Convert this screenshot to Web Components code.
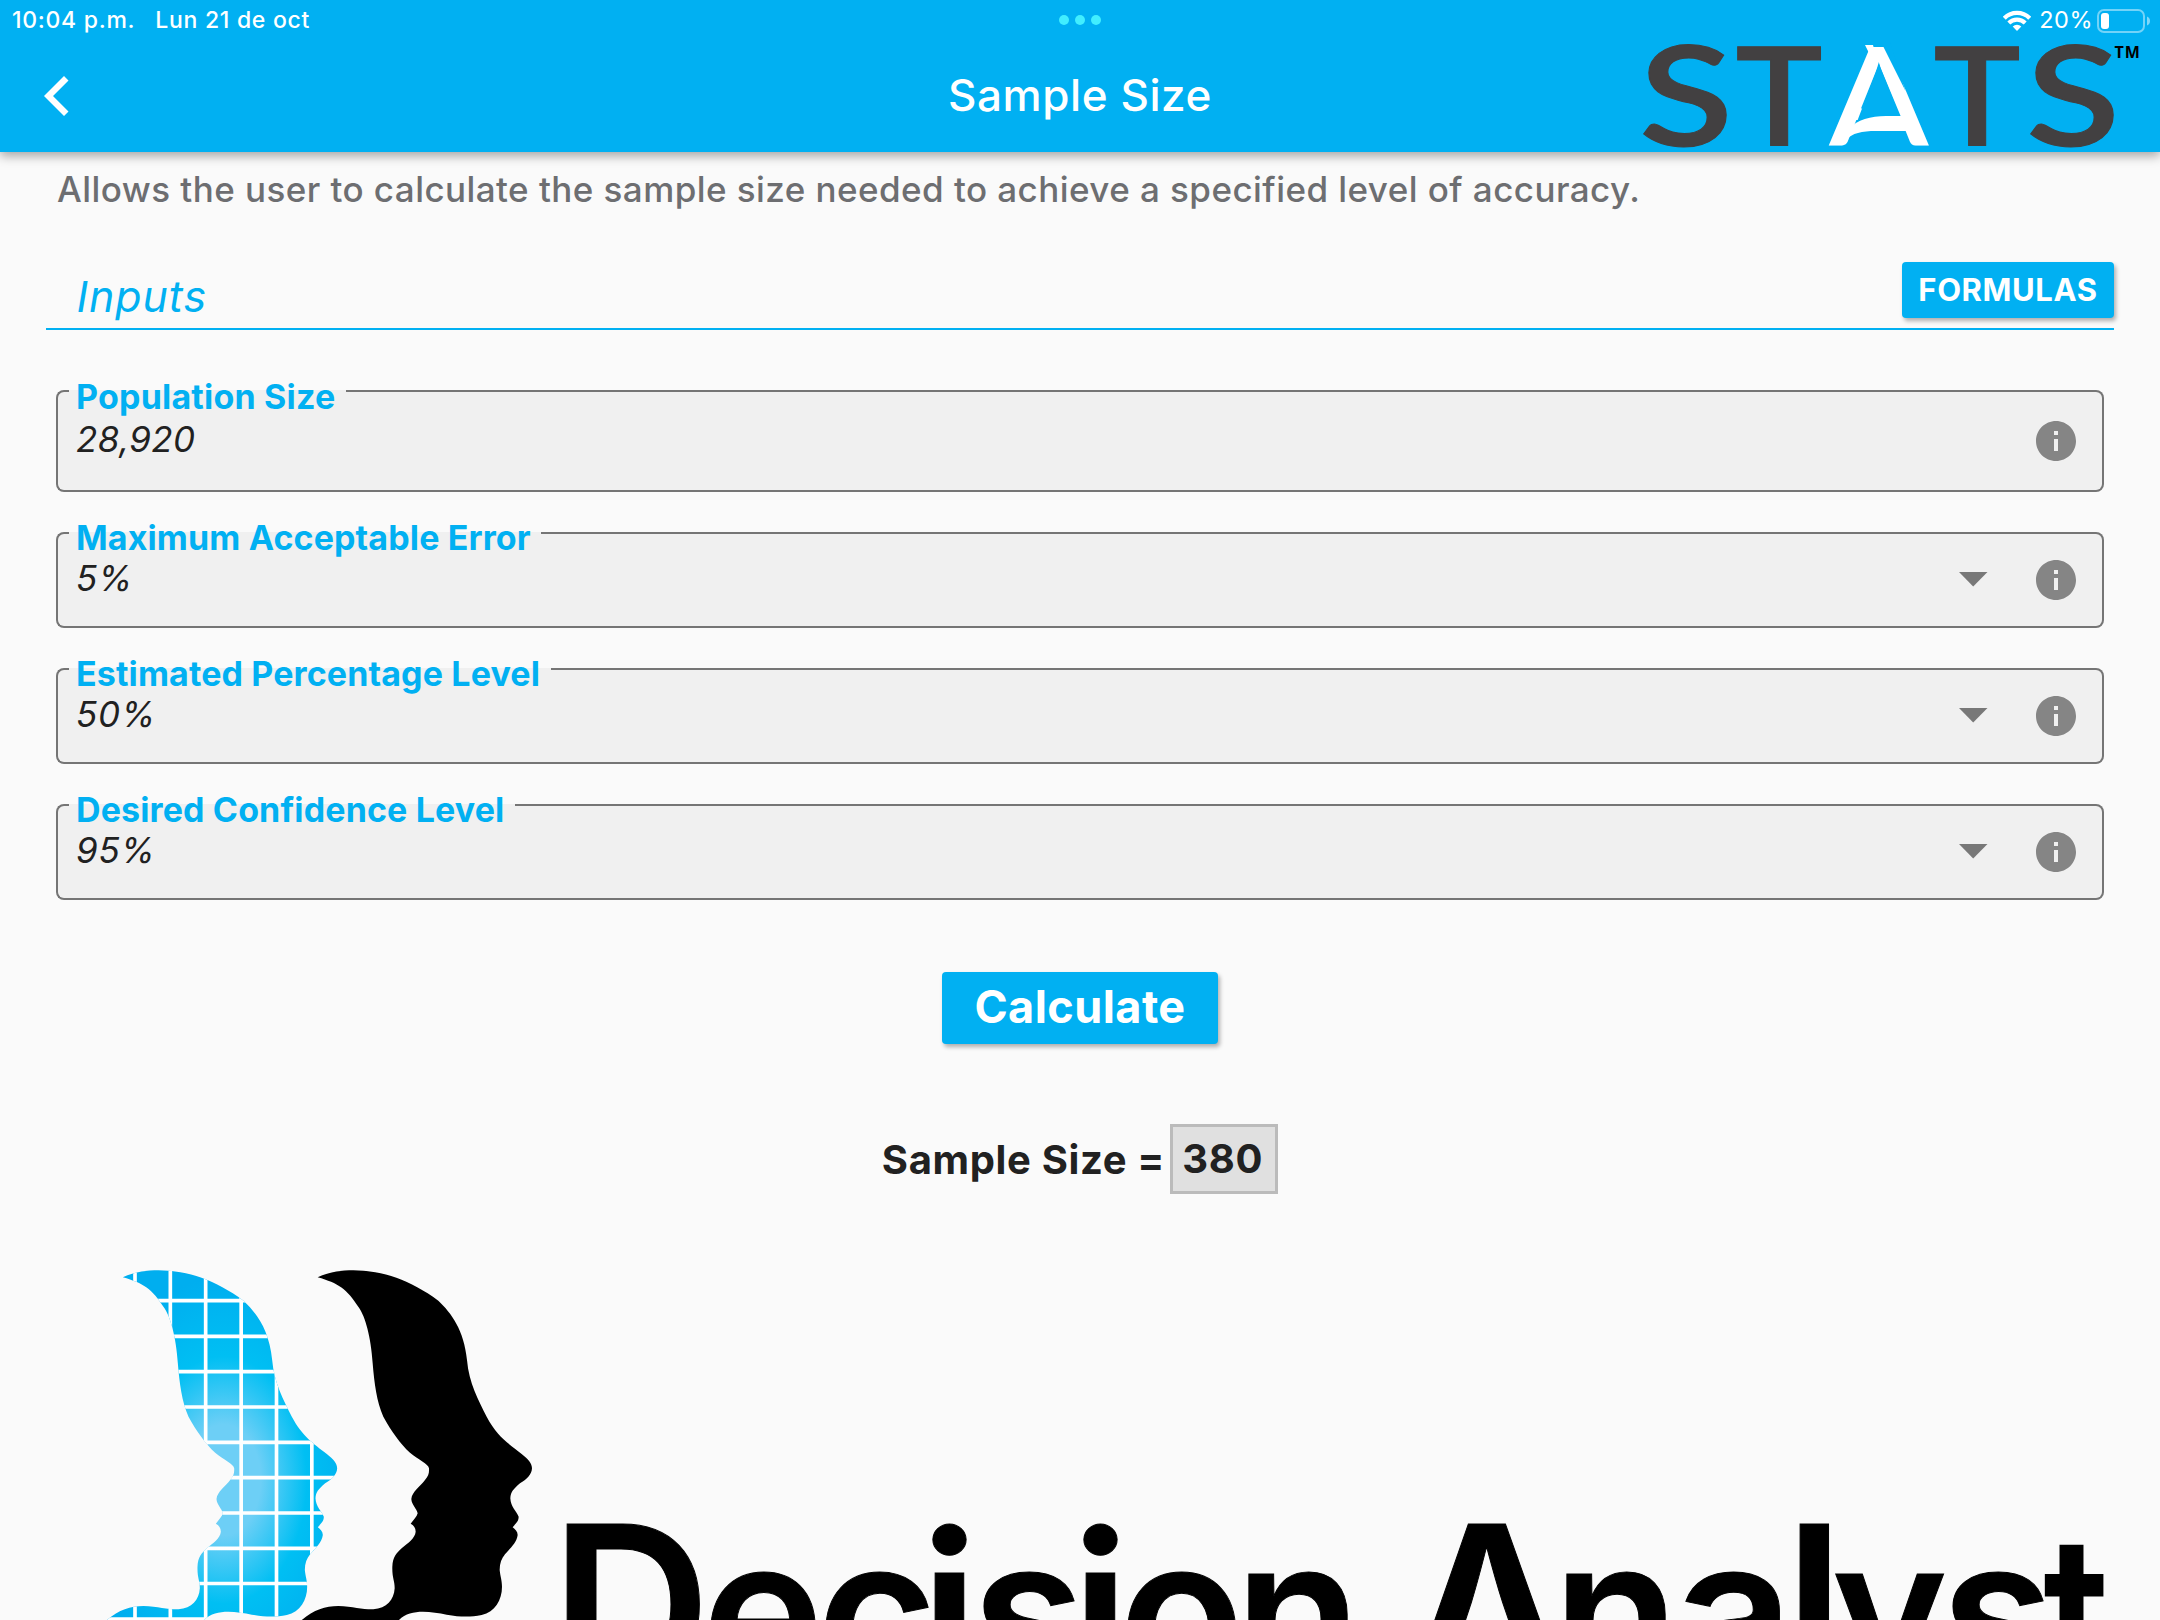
<!DOCTYPE html>
<html lang="en">
<head>
<meta charset="utf-8">
<title>Sample Size</title>
<style>
html,body{margin:0;height:1620px;overflow:hidden;background:#fafafa}
body{font-family:Inter,"Liberation Sans",sans-serif;color:#212121;--brand:#01b0f2}
</style>
</head>
<body>
<sample-size-page></sample-size-page>
<script>
const define=(name,html,init)=>{
  const t=document.createElement('template');t.innerHTML=html;
  customElements.define(name,class extends HTMLElement{
    connectedCallback(){
      if(this.shadowRoot)return;
      this.attachShadow({mode:'open'}).append(t.content.cloneNode(true));
      if(init)init.call(this,this.shadowRoot);
    }
  });
};

define('status-bar',`<style>
:host{display:grid;grid-template-columns:1fr auto 1fr;align-items:center;height:39px;color:#fff;font-size:23px;line-height:39px}
.l{display:flex;gap:20px;padding:1px 0 0 12px;font-weight:500;letter-spacing:.72px}
.dots{display:flex;gap:6px}.dots i{width:10px;height:10px;border-radius:50%;background:#41eeff}
.r{display:flex;justify-content:flex-end;align-items:center}
.pct{letter-spacing:.5px;margin-left:8px;margin-right:3px;font-size:23.5px;line-height:28px}
svg{display:block}
</style>
<div class="l"><span>10:04 p.m.</span><span>Lun 21 de oct</span></div>
<div class="dots"><i></i><i></i><i></i></div>
<div class="r">
<svg width="28" height="39" viewBox="2003 0 28 39" fill="none" stroke="#fff" stroke-width="4.200"><path d="M2004.3 17.2a18 18 0 0 1 25.4 0M2008.8 22a11.8 11.8 0 0 1 16.4 0"/><path d="M2012.7 25.4a6.4 6.4 0 0 1 8.6 0L2017 30z" fill="#fff" stroke="none"/></svg>
<span class="pct">20%</span>
<svg width="64" height="39" viewBox="2096 0 64 39"><rect x="2098" y="9" width="46" height="22" rx="6" fill="none" stroke="#fff" stroke-opacity=".45" stroke-width="2"/><rect x="2101" y="12" width="8" height="16" rx="3" fill="#fff"/><path d="M2147 15.5c4 1.5 4 7.500 0 9z" fill="#fff" opacity=".5"/></svg>
</div>`);

define('stats-logo',`<style>
:host{display:block;height:113px}svg{display:block}
text{font-family:Lato,sans-serif;font-weight:600}
.g{fill:#424041;stroke:#424041}.bg{fill:var(--brand)}
</style>
<svg width="520" height="113" viewBox="1640 39 520 113">
<g class="g" font-size="138" stroke-width="1">
<text transform="translate(1639 146) scale(1.25 1)">S</text>
<text transform="translate(1735.500 145) scale(1.06 .985)">T</text></g>
<text transform="translate(1829 145) scale(1.052 .985)" font-size="138" fill="#fff">A</text>
<!-- curved crossbar and flicked tip of the A -->
<path class="bg" d="M1879 64L1903.500 123H1856.500zM1881 42H1890L1905.500 91z"/>
<path fill="#fff" d="M1852 126C1862 117 1876 116 1892 116H1902L1908 131H1876C1862 131 1852 133 1846 140zM1865 45H1873L1877 60L1866 68L1871 57z"/>
<g class="g" font-size="138" stroke-width="1">
<text transform="translate(1933.500 145) scale(1.06 .985)">T</text>
<text transform="translate(2026 146) scale(1.25 1)">S</text></g>
<text x="2114.500" y="58" font-size="16" letter-spacing="1" style="font-family:'Open Sans';font-weight:700">TM</text>
</svg>`);

define('app-header',`<style>
:host{display:block;position:relative;height:152px;background:var(--brand);box-shadow:0 4px 10px rgba(0,0,0,.34)}
nav{display:grid;grid-template-columns:1fr auto 1fr;height:113px;color:#fff}
h1{margin:0;font-size:44px;font-weight:500;letter-spacing:.58px;line-height:113px}
.b{padding-left:43px;display:flex;align-items:center}
stats-logo{justify-self:end}
</style>
<status-bar></status-bar>
<nav><div class="b"><svg width="26" height="42" viewBox="43 75 26 42"><path d="M64 76l4.500 4.500L53 96l15.500 15.500L64 116 44 96z" fill="#fff"/></svg></div>
<h1><slot></slot></h1><stats-logo></stats-logo></nav>`);

define('raised-button',`<style>
:host{display:flex;box-sizing:border-box;align-items:center;justify-content:center;background:var(--brand);color:#fff;font-weight:700;border-radius:4px;box-shadow:2px 3px 4px rgba(0,0,0,.3);white-space:nowrap}
</style><slot></slot>`);

define('section-head',`<style>
:host{display:flex;justify-content:space-between;box-sizing:border-box;height:68px;border-bottom:2px solid var(--brand)}
h2{margin:0 0 0 30.500px;font-size:43px;font-weight:400;font-style:italic;letter-spacing:.9px;line-height:69px;color:var(--brand)}
raised-button{width:212px;height:56px;font-size:31px;letter-spacing:.6px;padding-bottom:1px}
</style><h2><slot></slot></h2><raised-button>FORMULAS</raised-button>`);

define('outlined-field',`<style>
:host{display:grid;height:96px;--c:#757575}
:host([tall]){height:102px}
.row,.line{grid-area:1/1}
.row{display:flex;align-items:center;background:#f0f0f0;border-radius:8px;padding:0 24px 0 20px}
.v{flex:1;font-size:35px;font-style:italic;letter-spacing:.8px;padding-bottom:4px}
:host([tall]) .v{letter-spacing:.4px}
.line{display:flex;min-height:0}
.a,.z{box-sizing:border-box;border:2px solid var(--c)}
.a{width:13px;border-right:0;border-radius:8px 0 0 8px}
.z{flex:1;border-left:0;border-radius:0 8px 8px 0}
.n{box-sizing:border-box;border-bottom:2px solid var(--c);padding:0 10.500px 0 7px}
label{display:block;margin-top:-14px;font-size:34px;font-weight:700;line-height:40px;letter-spacing:.13px;color:var(--brand);white-space:nowrap}
:host([tall]) label{margin-top:-13px;letter-spacing:.2px}
svg{display:block}.d{margin-right:35px}
:host([tall]) .d{display:none}
</style>
<div class="row"><div class="v"><slot></slot></div>
<svg class="d" width="48" height="48"><path d="M10 16h28.500L24.200 30.500z" fill="#787878"/></svg>
<svg width="48" height="48" viewBox="0 0 24 24"><path fill="#858585" d="M12 2C6.480 2 2 6.480 2 12s4.480 10 10 10 10-4.480 10-10S17.520 2 12 2zm1 15h-2v-6h2v6zm0-8h-2V7h2v2z"/></svg></div>
<div class="line"><div class="a"></div><div class="n"><label></label></div><div class="z"></div></div>`,
function(r){r.querySelector('label').textContent=this.getAttribute('label')});

define('result-line',`<style>
:host{display:flex;justify-content:center;align-items:center;height:70px;font-size:40px;font-weight:700;gap:5px}
.l{letter-spacing:.65px}
.b{box-sizing:border-box;width:108px;height:70px;line-height:63px;border:3px solid #bbb;background:#e0e0e0;padding-left:9px;letter-spacing:.8px}
</style><span class="l">Sample Size =</span><span class="b"><slot></slot></span>`);

define('decision-logo',`<style>:host{display:block}svg{display:block}text{font-weight:600}</style>
<svg width="2160" height="426" viewBox="0 1194 2160 426">
<defs>
<path id="head" d="M683,82 C720,65 760,61 790,61 C880,62 960,90 1045,152 C1085,190 1122,240 1131,330 C1137,400 1165,450 1190,500 C1222,560 1255,580 1295,612 C1315,628 1326,640 1326,655 C1325,675 1310,688 1290,700 C1270,718 1262,725 1261,745 C1262,770 1280,785 1286,800 C1286,815 1275,822 1268,832 C1275,838 1283,845 1283,855 C1280,878 1262,893 1245,913 C1235,925 1229,940 1229,960 C1231,980 1236,990 1236,1010 C1236,1050 1215,1085 1175,1095 C1140,1102 1110,1101 1070,1094 C1020,1085 960,1075 925,1112 L633,1112 C670,1080 705,1068 745,1068 C790,1070 820,1079 850,1078 C890,1075 912,1050 914,1015 C914,990 906,985 907,950 C908,920 920,910 935,895 C955,878 975,865 977,845 C977,832 970,826 962,821 C970,810 981,800 983,790 C980,775 965,765 964,747 C966,725 990,710 1005,690 C1015,678 1018,670 1017,655 C1015,640 985,630 960,608 C930,580 905,545 880,500 C860,455 853,400 848,340 C843,260 825,200 808,175 C770,115 745,100 683,82Z"/>
<radialGradient id="g" gradientUnits="userSpaceOnUse" cx="0" cy="0" r="1" gradientTransform="translate(985 690) scale(430 640)"><stop offset="0" stop-color="#6dcff6"/><stop offset=".26" stop-color="#6dcff6"/><stop offset=".58" stop-color="#00bff3"/><stop offset=".95" stop-color="#00aeef"/></radialGradient>
<clipPath id="c"><use href="#head"/></clipPath>
</defs>
<g transform="translate(90 1250) scale(.33333)">
<use href="#head"/>
<g transform="translate(-584.500 0)"><use href="#head" fill="url(#g)"/>
<g clip-path="url(#c)"><path stroke="#fff" stroke-width="11" d="M719.500 0V1112M825.500 0V1112M931.500 0V1112M1038 0V1112M1144 0V1112M1250 0V1112M600 152H1400M600 259H1400M600 365H1400M600 471H1400M600 577H1400M600 683H1400M600 789H1400M600 895H1400M600 1000.500H1400M600 1107H1400"/></g></g>
</g>
<text font-size="206" y="1686" stroke="#000" stroke-width="1"><tspan x="551" y="1685" font-size="221">D</tspan><tspan x="702" y="1686">e</tspan><tspan x="817">c</tspan><tspan x="920" y="1696" font-size="225">i</tspan><tspan x="972" y="1686">s</tspan><tspan x="1071" y="1696" font-size="225">i</tspan><tspan x="1119" y="1686">o</tspan><tspan x="1235">n</tspan> <tspan x="1406" y="1687" font-size="224">A</tspan><tspan x="1553" y="1686">n</tspan><tspan x="1675">a</tspan><tspan x="1785" y="1687" font-size="224">l</tspan><tspan x="1832" y="1681" font-size="196">y</tspan><tspan x="1941" y="1686">s</tspan></text>
<text transform="translate(2043 1697) scale(.84 1)" font-size="225">t</text>
</svg>`);

define('sample-size-page',`<style>
:host{display:flex;flex-direction:column;width:2160px;height:1620px;overflow:hidden;background:#fafafa}
p{margin:12px 0 0 57px;font-size:35px;font-weight:500;letter-spacing:.44px;line-height:50px;color:#6d6e71;white-space:nowrap}
section-head{margin:48px 46px 0}
.f{display:flex;flex-direction:column;gap:40px;margin:60px 56px 0}
.calc{align-self:center;width:276px;height:72px;margin-top:72px;font-size:45px;letter-spacing:.44px;padding-bottom:3px}
result-line{margin-top:80px}
</style>
<app-header>Sample Size</app-header>
<p>Allows the user to calculate the sample size needed to achieve a specified level of accuracy.</p>
<section-head>Inputs</section-head>
<div class="f">
<outlined-field tall label="Population Size">28,920</outlined-field>
<outlined-field label="Maximum Acceptable Error">5%</outlined-field>
<outlined-field label="Estimated Percentage Level">50%</outlined-field>
<outlined-field label="Desired Confidence Level">95%</outlined-field>
</div>
<raised-button class="calc">Calculate</raised-button>
<result-line>380</result-line>
<decision-logo></decision-logo>`);
</script>
</body>
</html>
